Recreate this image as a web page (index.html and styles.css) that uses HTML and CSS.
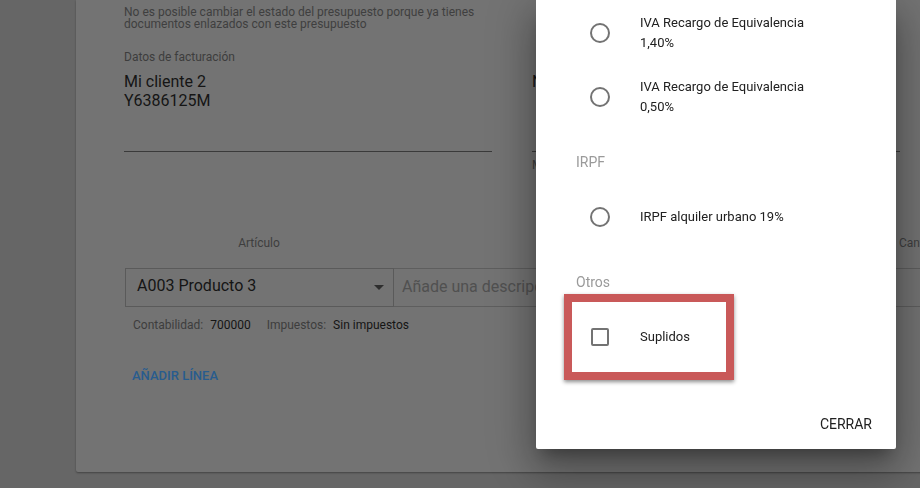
FILE: index.html
```html
<!DOCTYPE html>
<html lang="es">
<head>
<meta charset="utf-8">
<title>Presupuesto</title>
<link rel="stylesheet" href="styles.css">
</head>
<body>
<div class="card">
  <p class="notice">No es posible cambiar el estado del presupuesto porque ya tienes<br>documentos enlazados con este presupuesto</p>
  <div class="cols">
    <div class="col">
      <div class="label">Datos de facturación</div>
      <div class="field">
        <div class="val">Mi cliente 2</div>
        <div class="val">Y6386125M</div>
      </div>
    </div>
    <div class="col">
      <div class="label">&nbsp;</div>
      <div class="field">
        <div class="val">Notas</div>
      </div>
      <div class="helper">Máx.</div>
    </div>
  </div>
  <div class="lines">
    <div class="thead">
      <div class="th th-art">Artículo</div>
      <div class="th th-desc"></div>
      <div class="th th-cant">Cantidad</div>
    </div>
    <div class="trow">
      <div class="select">
        <span class="select-text">A003 Producto 3</span>
        <svg class="arrow" width="10" height="5" viewBox="0 0 10 5"><path d="M0 0h10L5 5z" fill="#2e2e2e"/></svg>
      </div>
      <div class="desc">Añade una descripción</div>
      <div class="cant"></div>
    </div>
    <div class="meta">
      <span class="meta-label">Contabilidad:</span><span class="meta-val">700000</span>
      <span class="meta-label">Impuestos:</span><span class="meta-val">Sin impuestos</span>
    </div>
    <a class="add">AÑADIR LÍNEA</a>
  </div>
</div>

<div class="dialog">
  <div class="opt">
    <span class="radio"></span>
    <div class="opt-text">IVA Recargo de Equivalencia<br>1,40%</div>
  </div>
  <div class="opt">
    <span class="radio"></span>
    <div class="opt-text">IVA Recargo de Equivalencia<br>0,50%</div>
  </div>
  <div class="subheader">IRPF</div>
  <div class="opt">
    <span class="radio"></span>
    <div class="opt-text">IRPF alquiler urbano 19%</div>
  </div>
  <div class="subheader subheader-otros">Otros</div>
  <div class="highlight">
    <span class="checkbox"></span>
    <span class="opt-text">Suplidos</span>
  </div>
  <div class="actions">
    <button class="btn">CERRAR</button>
  </div>
</div>
</body>
</html>
```
FILE: styles.css
```css
html, body {
  margin: 0;
  padding: 0;
}
body {
  width: 920px;
  height: 488px;
  overflow: hidden;
  background: #666666;
  font-family: Roboto, "Liberation Sans", Arial, sans-serif;
}
.card {
  margin-left: 76px;
  width: 900px;
  height: 472px;
  box-sizing: border-box;
  background: #737373;
  border-radius: 0 0 2px 2px;
  box-shadow: 0 1px 2px rgba(0,0,0,0.35);
  padding-left: 48px;
  padding-top: 6px;
}
.notice {
  margin: 0;
  font-size: 12px;
  line-height: 12px;
  color: #3f3f3f;
}
.cols {
  display: grid;
  grid-template-columns: 368px 368px;
  column-gap: 40px;
  margin-top: 20px;
}
.label {
  font-size: 12px;
  line-height: 14px;
  color: #3d3d3d;
}
.field {
  margin-top: 8px;
  height: 79px;
  border-bottom: 1px solid #3a3a3a;
}
.val {
  font-size: 16px;
  line-height: 19px;
  color: #151515;
}
.helper {
  margin-top: 6px;
  font-size: 12px;
  line-height: 14px;
  color: #3d3d3d;
}
.lines {
  margin-left: 1px;
}
.thead {
  display: flex;
  margin-top: 64px;
  font-size: 12px;
  line-height: 14px;
  color: #3e3e3e;
}
.th-art {
  width: 268px;
  text-align: center;
}
.th-desc {
  width: 505px;
}
.th-cant {
  padding-left: 1px;
}
.trow {
  display: flex;
  margin-top: 18px;
  height: 39px;
}
.select {
  width: 269px;
  box-sizing: border-box;
  border: 1px solid #5a5a5a;
  display: flex;
  align-items: center;
  justify-content: space-between;
  padding: 0 9px 0 11px;
}
.select-text {
  font-size: 16px;
  color: #151515;
  padding-bottom: 5px;
}
.arrow {
  display: block;
}
.desc {
  width: 504px;
  box-sizing: border-box;
  border-top: 1px solid #5e5e5e;
  border-bottom: 1px solid #5e5e5e;
  display: flex;
  align-items: center;
  padding-left: 8px;
  padding-bottom: 2px;
  font-size: 16px;
  color: #505050;
}
.cant {
  flex: 1;
  border-top: 1px solid #5e5e5e;
  border-bottom: 1px solid #5e5e5e;
}
.meta {
  margin-top: 11px;
  padding-left: 8px;
  font-size: 12px;
  line-height: 14px;
}
.meta-label {
  color: #3d3d3d;
  margin-right: 7px;
}
.meta-val {
  color: #151515;
  margin-right: 13px;
}
.add {
  display: block;
  margin-top: 36px;
  padding-left: 7px;
  font-size: 13px;
  line-height: 16px;
  font-weight: 500;
  color: #285c8e;
}

/* dialog */
.dialog {
  position: fixed;
  left: 536px;
  top: 0;
  width: 360px;
  height: 449px;
  box-sizing: border-box;
  background: #ffffff;
  border-radius: 0 0 2px 2px;
  padding-top: 1px;
  box-shadow: 0 11px 15px -7px rgba(0,0,0,0.3), 0 24px 38px 3px rgba(0,0,0,0.2), 0 9px 46px 8px rgba(0,0,0,0.18);
  color: #212121;
}
.opt {
  display: flex;
  align-items: center;
  padding: 12px 0 12px 54px;
}
.radio {
  width: 20px;
  height: 20px;
  box-sizing: border-box;
  border: 2px solid #737373;
  border-radius: 50%;
  margin-right: 30px;
  flex: none;
}
.opt-text {
  font-size: 13px;
  line-height: 20px;
}
.subheader {
  padding: 23px 0 23px 40px;
  font-size: 14px;
  line-height: 20px;
  color: #9a9a9a;
}
.subheader-otros {
  padding: 33px 0 2px 40px;
}
.highlight {
  margin-left: 28px;
  width: 170px;
  height: 86px;
  box-sizing: border-box;
  border: 8px solid #c95959;
  box-shadow: 0 2px 4px rgba(0,0,0,0.45);
  display: flex;
  align-items: center;
  padding-left: 19px;
}
.checkbox {
  width: 18px;
  height: 18px;
  box-sizing: border-box;
  border: 2px solid #737373;
  border-radius: 2px;
  margin-right: 31px;
  flex: none;
}
.actions {
  display: flex;
  justify-content: flex-end;
  padding: 26px 16px 7px;
}
.btn {
  height: 36px;
  padding: 0 8px;
  border: none;
  background: transparent;
  font-family: Roboto, "Liberation Sans", Arial, sans-serif;
  font-size: 14px;
  line-height: 36px;
  color: #212121;
}
```
